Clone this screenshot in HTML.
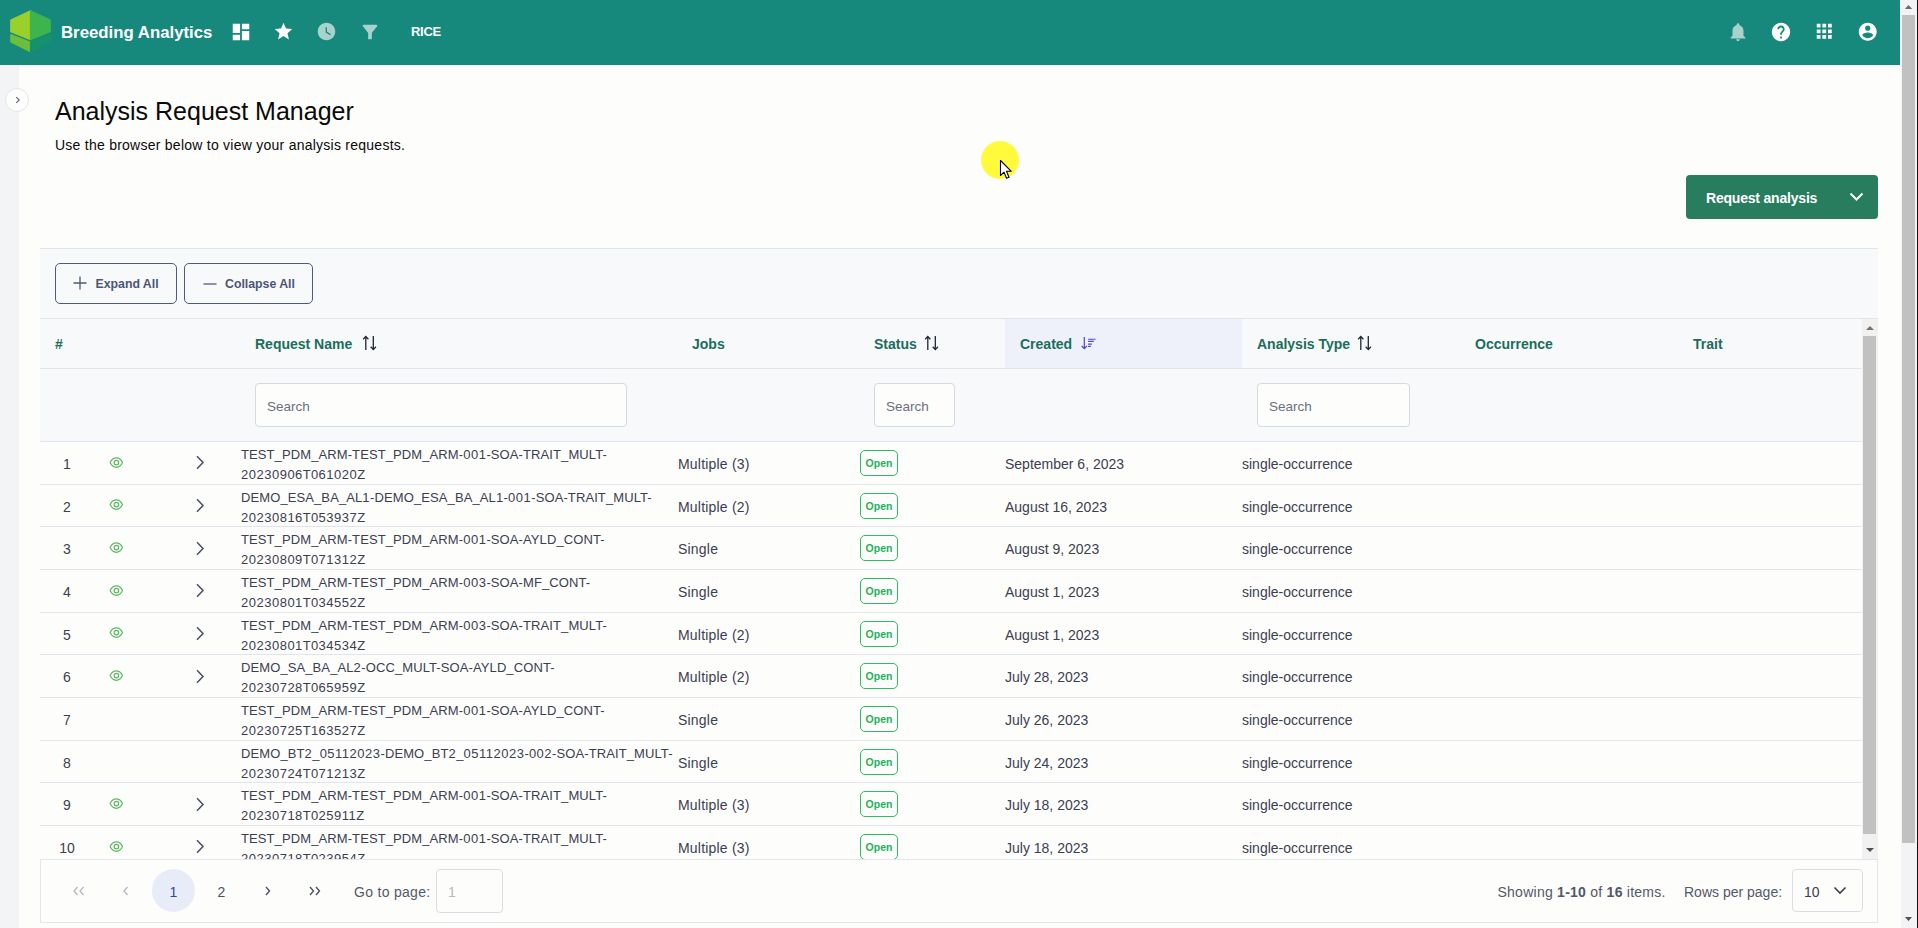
<!DOCTYPE html>
<html><head><meta charset="utf-8">
<style>
*{box-sizing:border-box;margin:0;padding:0}
html,body{width:1918px;height:928px;overflow:hidden;background:#fdfdfc;font-family:"Liberation Sans",sans-serif;color:#3b4050}
.a{position:absolute}
#hdr{left:0;top:0;width:1900px;height:65px;background:#16897c}
#side{left:0;top:65px;width:19px;height:863px;background:#f3f4f6}
svg{display:block}
.htxt{position:absolute;font-weight:bold;font-size:14px;color:#1b6e5c;white-space:nowrap}
.cell{position:absolute;font-size:14px;color:#3b4050;white-space:nowrap}
.num{position:absolute;left:40px;width:54px;text-align:center;font-size:14px;color:#3b4050}
.eye{left:108px}
.chev{left:194.8px}
.name{position:absolute;left:241px;font-size:13px;line-height:20px;color:#3b4050;white-space:nowrap;letter-spacing:0.1px}
.d{letter-spacing:0.5px}
.badge{width:38px;height:26px;border:1px solid #2dbd63;border-radius:5px;font-size:10.5px;font-weight:bold;color:#25b159;text-align:center;line-height:24px}
.rowline{position:absolute;left:40px;width:1822px;height:1px;background:#e2e5ee}
.srch{position:absolute;background:#fdfdfc;border:1px solid #d6d9df;border-radius:4px;font-size:13.5px;color:#6b7080;padding-left:11px;line-height:45px;height:44px;white-space:nowrap}
#clip{left:0;top:0;width:1862px;height:859px;overflow:hidden}
</style></head><body>
<!-- header -->
<div id="hdr" class="a">
  <svg class="a" style="left:0;top:0" width="60" height="64" viewBox="0 0 60 64">
    <g stroke-linejoin="round" stroke-width="1.2">
    <polygon points="10.8,20 30.5,10.8 30.5,39.6 10.8,31.8" fill="#9bcf2c" stroke="#9bcf2c"/>
    <polygon points="30.5,10.8 50.2,20 50.2,31.8 30.5,39.6" fill="#3db54c" stroke="#3db54c"/>
    <polygon points="10.8,34.6 30.5,42.4 30.5,51.8 10.8,42" fill="#6cbf3c" stroke="#6cbf3c"/>
    <polygon points="30.5,42.4 50.2,34.6 50.2,42 30.5,51.8" fill="#16926a" stroke="#16926a"/>
    </g>
  </svg>
  <div class="a" style="left:61px;top:22.5px;font-size:16.8px;font-weight:bold;color:#fff;white-space:nowrap">Breeding Analytics</div>
  <svg class="a" style="left:229.5px;top:20.5px" width="22" height="22" viewBox="0 0 24 24"><path fill="#fff" d="M3 13h8V3H3v10zm0 8h8v-6H3v6zm10 0h8V11h-8v10zm0-18v6h8V3h-8z"/></svg>
  <svg class="a" style="left:273px;top:20.8px" width="21" height="21" viewBox="0 0 24 24"><path fill="#fff" d="M12 17.27L18.18 21l-1.64-7.03L22 9.24l-7.19-.61L12 2 9.19 8.63 2 9.24l5.46 4.73L5.82 21z"/></svg>
  <svg class="a" style="left:316.3px;top:21.3px" width="21" height="21" viewBox="0 0 24 24"><path fill="#a9d2cd" d="M12 2C6.5 2 2 6.5 2 12s4.5 10 10 10 10-4.5 10-10S17.5 2 12 2zm4.2 14.2L11 13V7h1.5v5.2l4.5 2.7-.8 1.3z"/></svg>
  <svg class="a" style="left:358.7px;top:20.5px" width="22" height="22" viewBox="0 0 24 24"><path fill="#a9d2cd" d="M4.25 5.61C6.27 8.2 10 13 10 13v6c0 .55.45 1 1 1h2c.55 0 1-.45 1-1v-6s3.720-4.8 5.74-7.39c.51-.66.04-1.61-.79-1.61H5.04c-.83 0-1.3.95-.79 1.61z"/></svg>
  <div class="a" style="left:411px;top:24px;font-size:13px;letter-spacing:-0.3px;font-weight:bold;color:#fff">RICE</div>
  <svg class="a" style="left:1727px;top:20.7px" width="22" height="22" viewBox="0 0 24 24"><path fill="#a9d2cd" d="M12 22c1.1 0 2-.9 2-2h-4c0 1.1.89 2 2 2zm6-6v-5c0-3.07-1.64-5.64-4.5-6.32V4c0-.83-.67-1.5-1.5-1.5s-1.5.67-1.5 1.5v.68C7.63 5.36 6 7.92 6 11v5l-2 2v1h16v-1l-2-2z"/></svg>
  <svg class="a" style="left:1770px;top:20.8px" width="22" height="22" viewBox="0 0 24 24"><path fill="#fff" d="M12 2C6.48 2 2 6.48 2 12s4.48 10 10 10 10-4.48 10-10S17.52 2 12 2zm1 17h-2v-2h2v2zm2.07-7.75l-.9.92C13.45 12.9 13 13.5 13 15h-2v-.5c0-1.1.45-2.1 1.17-2.83l1.24-1.26c.37-.36.59-.86.59-1.41 0-1.1-.9-2-2-2s-2 .9-2 2H8c0-2.21 1.79-4 4-4s4 1.79 4 4c0 .88-.36 1.68-.93 2.25z"/></svg>
  <svg class="a" style="left:1813.2px;top:20.2px" width="22.5" height="22.5" viewBox="0 0 24 24"><path fill="#fff" d="M4 8h4V4H4v4zm6 12h4v-4h-4v4zm-6 0h4v-4H4v4zm0-6h4v-4H4v4zm6 0h4v-4h-4v4zm6-10v4h4V4h-4zm-6 4h4V4h-4v4zm6 6h4v-4h-4v4zm0 6h4v-4h-4v4z"/></svg>
  <svg class="a" style="left:1856.8px;top:20.8px" width="21.5" height="21.5" viewBox="0 0 24 24"><path fill="#fff" d="M12 2C6.48 2 2 6.48 2 12s4.48 10 10 10 10-4.48 10-10S17.52 2 12 2zm0 3c1.66 0 3 1.34 3 3s-1.34 3-3 3-3-1.34-3-3 1.34-3 3-3zm0 14.2c-2.5 0-4.71-1.28-6-3.22.03-1.99 4-3.08 6-3.08 1.99 0 5.97 1.09 6 3.08-1.29 1.94-3.5 3.22-6 3.22z"/></svg>
</div>
<div id="side" class="a"></div>
<div class="a" style="left:5px;top:88px;width:24px;height:24px;border-radius:50%;background:#fdfdfc;border:1px solid #e4e6ea"></div>
<svg class="a" style="left:14px;top:95px" width="8" height="10" viewBox="0 0 8 10"><path d="M2.3 2.2L5.2 5L2.3 7.8" stroke="#5a6070" stroke-width="1.1" fill="none"/></svg>

<!-- title -->
<div class="a" style="left:55px;top:97px;font-size:25px;color:#0a0a0a;white-space:nowrap">Analysis Request Manager</div>
<div class="a" style="left:55px;top:137px;font-size:14px;color:#0a0a0a;white-space:nowrap;letter-spacing:0.25px">Use the browser below to view your analysis requests.</div>

<!-- request button -->
<div class="a" style="left:1686px;top:175px;width:192px;height:44px;background:#277d5d;border-radius:4px"></div>
<div class="a" style="left:1706px;top:190px;font-size:14px;letter-spacing:-0.2px;font-weight:bold;color:#fff;white-space:nowrap">Request analysis</div>
<svg class="a" style="left:1849px;top:191px" width="15" height="11" viewBox="0 0 15 11"><path d="M1.5 2.5 L7.5 8.5 L13.5 2.5" stroke="#fff" stroke-width="2" fill="none"/></svg>

<!-- table container -->
<div class="a" style="left:40px;top:248px;width:1838px;height:611px;background:#f8f9fb;border-top:1px solid #e2e4ea"></div>
<!-- toolbar buttons -->
<div class="a" style="left:55px;top:263px;width:122px;height:41px;border:1px solid #4f5a7a;border-radius:5px"></div>
<svg class="a" style="left:73px;top:276px" width="14" height="14" viewBox="0 0 14 14"><path d="M7 0.5V13.5M0.5 7H13.5" stroke="#4f5a7a" stroke-width="1.3"/></svg>
<div class="a" style="left:95.5px;top:277px;font-size:12.3px;font-weight:bold;color:#4b5675;white-space:nowrap">Expand All</div>
<div class="a" style="left:184px;top:263px;width:129px;height:41px;border:1px solid #4f5a7a;border-radius:5px"></div>
<svg class="a" style="left:203px;top:277px" width="14" height="14" viewBox="0 0 14 14"><path d="M0.5 7H13.5" stroke="#4f5a7a" stroke-width="1.3"/></svg>
<div class="a" style="left:225px;top:277px;font-size:12.3px;font-weight:bold;color:#4b5675;white-space:nowrap">Collapse All</div>
<div class="a" style="left:40px;top:318px;width:1838px;height:1px;background:#e2e4ea"></div>
<!-- data area white bg -->
<div class="a" style="left:40px;top:441px;width:1822px;height:418px;background:#fdfdfc"></div>
<div id="clip" class="a"><div class="rowline" style="top:441.00px"></div>
<div class="num" style="top:455.83px">1</div>
<svg class="a eye" style="top:455.53px" width="16" height="14" viewBox="0 0 16 14"><path d="M2.1 6.6 C3.6 3.4 5.7 1.9 8.3 1.9 C10.9 1.9 13 3.4 14.5 6.6 C13 9.8 10.9 11.3 8.3 11.3 C5.7 11.3 3.6 9.8 2.1 6.6 Z" fill="none" stroke="#5eb963" stroke-width="1.2"/><circle cx="8.4" cy="6.6" r="2.3" fill="none" stroke="#5eb963" stroke-width="1.2"/></svg>
<svg class="a chev" style="top:455.23px" width="10" height="15" viewBox="0 0 10 15"><path d="M2 1.2 L8 7.5 L2 13.8" fill="none" stroke="#4a5266" stroke-width="1.55"/></svg>
<div class="name" style="top:444.83px">TEST_PDM_ARM-TEST_PDM_ARM-<span class="d">001</span>-SOA-TRAIT_MULT-<br><span class="d">20230906</span>T<span class="d">061020</span>Z</div>
<div class="cell" style="left:678px;top:455.83px;letter-spacing:0.2px">Multiple (3)</div>
<div class="a badge" style="left:860px;top:449.83px">Open</div>
<div class="cell" style="left:1005px;top:455.83px">September 6, 2023</div>
<div class="cell" style="left:1242px;top:455.83px">single-occurrence</div>
<div class="rowline" style="top:483.67px"></div>
<div class="num" style="top:498.50px">2</div>
<svg class="a eye" style="top:498.20px" width="16" height="14" viewBox="0 0 16 14"><path d="M2.1 6.6 C3.6 3.4 5.7 1.9 8.3 1.9 C10.9 1.9 13 3.4 14.5 6.6 C13 9.8 10.9 11.3 8.3 11.3 C5.7 11.3 3.6 9.8 2.1 6.6 Z" fill="none" stroke="#5eb963" stroke-width="1.2"/><circle cx="8.4" cy="6.6" r="2.3" fill="none" stroke="#5eb963" stroke-width="1.2"/></svg>
<svg class="a chev" style="top:497.90px" width="10" height="15" viewBox="0 0 10 15"><path d="M2 1.2 L8 7.5 L2 13.8" fill="none" stroke="#4a5266" stroke-width="1.55"/></svg>
<div class="name" style="top:487.50px">DEMO_ESA_BA_AL<span class="d">1</span>-DEMO_ESA_BA_AL<span class="d">1</span>-<span class="d">001</span>-SOA-TRAIT_MULT-<br><span class="d">20230816</span>T<span class="d">053937</span>Z</div>
<div class="cell" style="left:678px;top:498.50px;letter-spacing:0.2px">Multiple (2)</div>
<div class="a badge" style="left:860px;top:492.50px">Open</div>
<div class="cell" style="left:1005px;top:498.50px">August 16, 2023</div>
<div class="cell" style="left:1242px;top:498.50px">single-occurrence</div>
<div class="rowline" style="top:526.33px"></div>
<div class="num" style="top:541.17px">3</div>
<svg class="a eye" style="top:540.87px" width="16" height="14" viewBox="0 0 16 14"><path d="M2.1 6.6 C3.6 3.4 5.7 1.9 8.3 1.9 C10.9 1.9 13 3.4 14.5 6.6 C13 9.8 10.9 11.3 8.3 11.3 C5.7 11.3 3.6 9.8 2.1 6.6 Z" fill="none" stroke="#5eb963" stroke-width="1.2"/><circle cx="8.4" cy="6.6" r="2.3" fill="none" stroke="#5eb963" stroke-width="1.2"/></svg>
<svg class="a chev" style="top:540.57px" width="10" height="15" viewBox="0 0 10 15"><path d="M2 1.2 L8 7.5 L2 13.8" fill="none" stroke="#4a5266" stroke-width="1.55"/></svg>
<div class="name" style="top:530.17px">TEST_PDM_ARM-TEST_PDM_ARM-<span class="d">001</span>-SOA-AYLD_CONT-<br><span class="d">20230809</span>T<span class="d">071312</span>Z</div>
<div class="cell" style="left:678px;top:541.17px;letter-spacing:0.2px">Single</div>
<div class="a badge" style="left:860px;top:535.17px">Open</div>
<div class="cell" style="left:1005px;top:541.17px">August 9, 2023</div>
<div class="cell" style="left:1242px;top:541.17px">single-occurrence</div>
<div class="rowline" style="top:569.00px"></div>
<div class="num" style="top:583.83px">4</div>
<svg class="a eye" style="top:583.53px" width="16" height="14" viewBox="0 0 16 14"><path d="M2.1 6.6 C3.6 3.4 5.7 1.9 8.3 1.9 C10.9 1.9 13 3.4 14.5 6.6 C13 9.8 10.9 11.3 8.3 11.3 C5.7 11.3 3.6 9.8 2.1 6.6 Z" fill="none" stroke="#5eb963" stroke-width="1.2"/><circle cx="8.4" cy="6.6" r="2.3" fill="none" stroke="#5eb963" stroke-width="1.2"/></svg>
<svg class="a chev" style="top:583.23px" width="10" height="15" viewBox="0 0 10 15"><path d="M2 1.2 L8 7.5 L2 13.8" fill="none" stroke="#4a5266" stroke-width="1.55"/></svg>
<div class="name" style="top:572.83px">TEST_PDM_ARM-TEST_PDM_ARM-<span class="d">003</span>-SOA-MF_CONT-<br><span class="d">20230801</span>T<span class="d">034552</span>Z</div>
<div class="cell" style="left:678px;top:583.83px;letter-spacing:0.2px">Single</div>
<div class="a badge" style="left:860px;top:577.83px">Open</div>
<div class="cell" style="left:1005px;top:583.83px">August 1, 2023</div>
<div class="cell" style="left:1242px;top:583.83px">single-occurrence</div>
<div class="rowline" style="top:611.67px"></div>
<div class="num" style="top:626.50px">5</div>
<svg class="a eye" style="top:626.20px" width="16" height="14" viewBox="0 0 16 14"><path d="M2.1 6.6 C3.6 3.4 5.7 1.9 8.3 1.9 C10.9 1.9 13 3.4 14.5 6.6 C13 9.8 10.9 11.3 8.3 11.3 C5.7 11.3 3.6 9.8 2.1 6.6 Z" fill="none" stroke="#5eb963" stroke-width="1.2"/><circle cx="8.4" cy="6.6" r="2.3" fill="none" stroke="#5eb963" stroke-width="1.2"/></svg>
<svg class="a chev" style="top:625.90px" width="10" height="15" viewBox="0 0 10 15"><path d="M2 1.2 L8 7.5 L2 13.8" fill="none" stroke="#4a5266" stroke-width="1.55"/></svg>
<div class="name" style="top:615.50px">TEST_PDM_ARM-TEST_PDM_ARM-<span class="d">003</span>-SOA-TRAIT_MULT-<br><span class="d">20230801</span>T<span class="d">034534</span>Z</div>
<div class="cell" style="left:678px;top:626.50px;letter-spacing:0.2px">Multiple (2)</div>
<div class="a badge" style="left:860px;top:620.50px">Open</div>
<div class="cell" style="left:1005px;top:626.50px">August 1, 2023</div>
<div class="cell" style="left:1242px;top:626.50px">single-occurrence</div>
<div class="rowline" style="top:654.34px"></div>
<div class="num" style="top:669.17px">6</div>
<svg class="a eye" style="top:668.87px" width="16" height="14" viewBox="0 0 16 14"><path d="M2.1 6.6 C3.6 3.4 5.7 1.9 8.3 1.9 C10.9 1.9 13 3.4 14.5 6.6 C13 9.8 10.9 11.3 8.3 11.3 C5.7 11.3 3.6 9.8 2.1 6.6 Z" fill="none" stroke="#5eb963" stroke-width="1.2"/><circle cx="8.4" cy="6.6" r="2.3" fill="none" stroke="#5eb963" stroke-width="1.2"/></svg>
<svg class="a chev" style="top:668.57px" width="10" height="15" viewBox="0 0 10 15"><path d="M2 1.2 L8 7.5 L2 13.8" fill="none" stroke="#4a5266" stroke-width="1.55"/></svg>
<div class="name" style="top:658.17px">DEMO_SA_BA_AL<span class="d">2</span>-OCC_MULT-SOA-AYLD_CONT-<br><span class="d">20230728</span>T<span class="d">065959</span>Z</div>
<div class="cell" style="left:678px;top:669.17px;letter-spacing:0.2px">Multiple (2)</div>
<div class="a badge" style="left:860px;top:663.17px">Open</div>
<div class="cell" style="left:1005px;top:669.17px">July 28, 2023</div>
<div class="cell" style="left:1242px;top:669.17px">single-occurrence</div>
<div class="rowline" style="top:697.00px"></div>
<div class="num" style="top:711.84px">7</div>
<div class="name" style="top:700.84px">TEST_PDM_ARM-TEST_PDM_ARM-<span class="d">001</span>-SOA-AYLD_CONT-<br><span class="d">20230725</span>T<span class="d">163527</span>Z</div>
<div class="cell" style="left:678px;top:711.84px;letter-spacing:0.2px">Single</div>
<div class="a badge" style="left:860px;top:705.84px">Open</div>
<div class="cell" style="left:1005px;top:711.84px">July 26, 2023</div>
<div class="cell" style="left:1242px;top:711.84px">single-occurrence</div>
<div class="rowline" style="top:739.67px"></div>
<div class="num" style="top:754.50px">8</div>
<div class="name" style="top:743.50px">DEMO_BT<span class="d">2</span>_<span class="d">05112023</span>-DEMO_BT<span class="d">2</span>_<span class="d">05112023</span>-<span class="d">002</span>-SOA-TRAIT_MULT-<br><span class="d">20230724</span>T<span class="d">071213</span>Z</div>
<div class="cell" style="left:678px;top:754.50px;letter-spacing:0.2px">Single</div>
<div class="a badge" style="left:860px;top:748.50px">Open</div>
<div class="cell" style="left:1005px;top:754.50px">July 24, 2023</div>
<div class="cell" style="left:1242px;top:754.50px">single-occurrence</div>
<div class="rowline" style="top:782.34px"></div>
<div class="num" style="top:797.17px">9</div>
<svg class="a eye" style="top:796.87px" width="16" height="14" viewBox="0 0 16 14"><path d="M2.1 6.6 C3.6 3.4 5.7 1.9 8.3 1.9 C10.9 1.9 13 3.4 14.5 6.6 C13 9.8 10.9 11.3 8.3 11.3 C5.7 11.3 3.6 9.8 2.1 6.6 Z" fill="none" stroke="#5eb963" stroke-width="1.2"/><circle cx="8.4" cy="6.6" r="2.3" fill="none" stroke="#5eb963" stroke-width="1.2"/></svg>
<svg class="a chev" style="top:796.57px" width="10" height="15" viewBox="0 0 10 15"><path d="M2 1.2 L8 7.5 L2 13.8" fill="none" stroke="#4a5266" stroke-width="1.55"/></svg>
<div class="name" style="top:786.17px">TEST_PDM_ARM-TEST_PDM_ARM-<span class="d">001</span>-SOA-TRAIT_MULT-<br><span class="d">20230718</span>T<span class="d">025911</span>Z</div>
<div class="cell" style="left:678px;top:797.17px;letter-spacing:0.2px">Multiple (3)</div>
<div class="a badge" style="left:860px;top:791.17px">Open</div>
<div class="cell" style="left:1005px;top:797.17px">July 18, 2023</div>
<div class="cell" style="left:1242px;top:797.17px">single-occurrence</div>
<div class="rowline" style="top:825.00px"></div>
<div class="num" style="top:839.84px">10</div>
<svg class="a eye" style="top:839.54px" width="16" height="14" viewBox="0 0 16 14"><path d="M2.1 6.6 C3.6 3.4 5.7 1.9 8.3 1.9 C10.9 1.9 13 3.4 14.5 6.6 C13 9.8 10.9 11.3 8.3 11.3 C5.7 11.3 3.6 9.8 2.1 6.6 Z" fill="none" stroke="#5eb963" stroke-width="1.2"/><circle cx="8.4" cy="6.6" r="2.3" fill="none" stroke="#5eb963" stroke-width="1.2"/></svg>
<svg class="a chev" style="top:839.24px" width="10" height="15" viewBox="0 0 10 15"><path d="M2 1.2 L8 7.5 L2 13.8" fill="none" stroke="#4a5266" stroke-width="1.55"/></svg>
<div class="name" style="top:828.84px">TEST_PDM_ARM-TEST_PDM_ARM-<span class="d">001</span>-SOA-TRAIT_MULT-<br><span class="d">20230718</span>T<span class="d">023954</span>Z</div>
<div class="cell" style="left:678px;top:839.84px;letter-spacing:0.2px">Multiple (3)</div>
<div class="a badge" style="left:860px;top:833.84px">Open</div>
<div class="cell" style="left:1005px;top:839.84px">July 18, 2023</div>
<div class="cell" style="left:1242px;top:839.84px">single-occurrence</div>
<div class="rowline" style="top:867.67px"></div></div>
<!-- header row -->
<div class="a" style="left:1005px;top:319px;width:237px;height:49px;background:#eef1f9"></div>
<div class="a" style="left:40px;top:368px;width:1822px;height:1px;background:#e2e4ea"></div>
<div class="htxt" style="left:55px;top:336px">#</div>
<div class="htxt" style="left:255px;top:336px">Request Name</div>
<svg class="a" style="left:362px;top:335px" width="15" height="16" viewBox="0 0 15 16"><path d="M3.8 15V1.6M1.2 4.2L3.8 1.4L6.4 4.2" stroke="#1f2633" stroke-width="1.3" fill="none"/><path d="M11.3 1V14.4M8.7 11.8L11.3 14.6L13.9 11.8" stroke="#1f2633" stroke-width="1.3" fill="none"/></svg>
<div class="htxt" style="left:692px;top:336px">Jobs</div>
<div class="htxt" style="left:874px;top:336px">Status</div>
<svg class="a" style="left:924px;top:335px" width="15" height="16" viewBox="0 0 15 16"><path d="M3.8 15V1.6M1.2 4.2L3.8 1.4L6.4 4.2" stroke="#1f2633" stroke-width="1.3" fill="none"/><path d="M11.3 1V14.4M8.7 11.8L11.3 14.6L13.9 11.8" stroke="#1f2633" stroke-width="1.3" fill="none"/></svg>
<div class="htxt" style="left:1020px;top:336px">Created</div>
<svg class="a" style="left:1075px;top:332px" width="25" height="23" viewBox="0 0 25 23"><path d="M9.3 5V16.4M6.7 14L9.3 16.7L11.9 14" stroke="#4a49cf" stroke-width="1.2" fill="none"/><path d="M13.1 7.3H20.5M13.1 9.4H18.8M13.1 12.1H16.8M13.1 14.4H15.8" stroke="#4a49cf" stroke-width="1.1" fill="none"/></svg>
<div class="htxt" style="left:1257px;top:336px">Analysis Type</div>
<svg class="a" style="left:1357px;top:335px" width="15" height="16" viewBox="0 0 15 16"><path d="M3.8 15V1.6M1.2 4.2L3.8 1.4L6.4 4.2" stroke="#1f2633" stroke-width="1.3" fill="none"/><path d="M11.3 1V14.4M8.7 11.8L11.3 14.6L13.9 11.8" stroke="#1f2633" stroke-width="1.3" fill="none"/></svg>
<div class="htxt" style="left:1475px;top:336px">Occurrence</div>
<div class="htxt" style="left:1693px;top:336px">Trait</div>
<!-- filter row -->
<div class="srch" style="left:255px;top:383px;width:372px">Search</div>
<div class="srch" style="left:874px;top:383px;width:81px">Search</div>
<div class="srch" style="left:1257px;top:383px;width:153px">Search</div>
<!-- inner scrollbar -->
<div class="a" style="left:1862px;top:319px;width:16px;height:540px;background:#f1f1f1"></div>
<div class="a" style="left:1863px;top:336px;width:13px;height:498px;background:#c1c1c1"></div>
<svg class="a" style="left:1864px;top:323px" width="12" height="10" viewBox="0 0 12 10"><path d="M2 7L6 3L10 7Z" fill="#77716f"/></svg>
<svg class="a" style="left:1864px;top:845px" width="12" height="10" viewBox="0 0 12 10"><path d="M2 3L6 7L10 3Z" fill="#505050"/></svg>
<!-- pagination -->
<div class="a" style="left:40px;top:859px;width:1838px;height:64px;background:#fdfdfc;border:1px solid #e2e5ee"></div>
<svg class="a" style="left:72px;top:886px" width="14" height="10" viewBox="0 0 14 10"><path d="M5.5 1L2 5L5.5 9M11.5 1L8 5L11.5 9" stroke="#b4b8c2" stroke-width="1.3" fill="none"/></svg>
<svg class="a" style="left:122px;top:886px" width="8" height="10" viewBox="0 0 8 10"><path d="M5.5 1L2 5L5.5 9" stroke="#b4b8c2" stroke-width="1.3" fill="none"/></svg>
<div class="a" style="left:152px;top:869px;width:43px;height:43px;border-radius:50%;background:#e8ecf8"></div>
<div class="a" style="left:152px;top:884px;width:43px;text-align:center;font-size:14px;color:#3b3f9e">1</div>
<div class="a" style="left:200px;top:884px;width:43px;text-align:center;font-size:14px;color:#4b5263">2</div>
<svg class="a" style="left:264px;top:886px" width="8" height="10" viewBox="0 0 8 10"><path d="M2 1L5.5 5L2 9" stroke="#4b5263" stroke-width="1.4" fill="none"/></svg>
<svg class="a" style="left:308px;top:886px" width="14" height="10" viewBox="0 0 14 10"><path d="M2 1L5.5 5L2 9M8 1L11.5 5L8 9" stroke="#4b5263" stroke-width="1.4" fill="none"/></svg>
<div class="a" style="left:354px;top:884px;font-size:14px;letter-spacing:0.3px;color:#535968;white-space:nowrap">Go to page:</div>
<div class="a" style="left:436px;top:869px;width:67px;height:44px;border:1px solid #dadde3;border-radius:4px;background:#fdfdfc"></div>
<div class="a" style="left:448px;top:884px;font-size:14px;color:#b4b8c2">1</div>
<div class="a" style="left:1497.5px;top:884px;font-size:14px;letter-spacing:0.25px;color:#535968;white-space:nowrap">Showing <b>1-10</b> of <b>16</b> items.</div>
<div class="a" style="left:1684px;top:884px;font-size:14px;color:#535968;white-space:nowrap">Rows per page:</div>
<div class="a" style="left:1792px;top:869px;width:71px;height:43px;border:1px solid #dadde3;border-radius:4px;background:#fdfdfc"></div>
<div class="a" style="left:1804px;top:884px;font-size:14px;color:#3b4050">10</div>
<svg class="a" style="left:1833px;top:886px" width="14" height="9" viewBox="0 0 14 9"><path d="M1.5 1.5L7 7L12.5 1.5" stroke="#3b4050" stroke-width="1.6" fill="none"/></svg>
<!-- browser scrollbar -->
<div class="a" style="left:1900px;top:0;width:18px;height:928px;background:#f3f3f5"></div>
<div class="a" style="left:1900px;top:0;width:1px;height:928px;background:#fdfdfd"></div>
<div class="a" style="left:1917px;top:0;width:1px;height:928px;background:#111"></div>
<div class="a" style="left:1902px;top:15px;width:13px;height:828px;background:#c1c1c1"></div>
<svg class="a" style="left:1903px;top:2px" width="12" height="10" viewBox="0 0 12 10"><path d="M1.8 7L5.5 3L9.2 7Z" fill="#6e6b6b"/></svg>
<svg class="a" style="left:1903px;top:914px" width="12" height="10" viewBox="0 0 12 10"><path d="M2 3L5.5 7L9 3Z" fill="#505050"/></svg>
<!-- cursor highlight -->
<div class="a" style="left:981px;top:141px;width:38px;height:38px;border-radius:50%;background:#fffa3c"></div>
<svg class="a" style="left:999px;top:159px" width="14" height="21" viewBox="0 0 14 21"><path d="M1.5 1.5V16.5L5 13.2L7.6 19.2L10 18.2L7.5 12.3H12.3Z" fill="#fff" stroke="#000" stroke-width="1.1" stroke-linejoin="round"/></svg>
</body></html>
